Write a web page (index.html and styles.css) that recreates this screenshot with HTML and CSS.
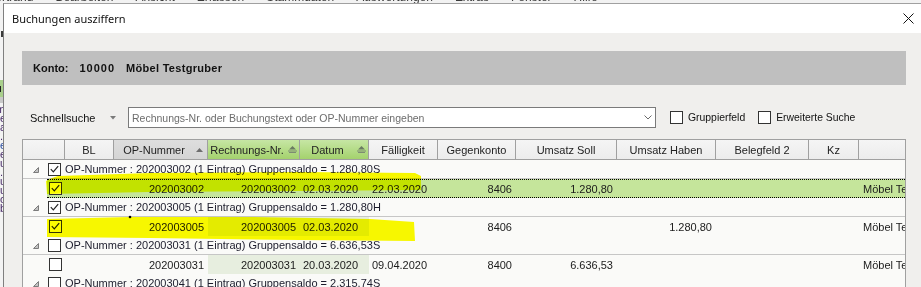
FILE: index.html
```html
<!DOCTYPE html>
<html lang="de">
<head>
  <meta charset="UTF-8">
  <title>Buchungen ausziffern</title>
  <link rel="stylesheet" href="styles.css">
</head>
<body>
  <div class="menubar">
    <span class="first">Vertrand</span><span>Bearbeiten</span><span>Ansicht</span><span>Erfassen</span><span>Stammdaten</span><span>Auswertungen</span><span>Extras</span><span>Fenster</span><span>Hilfe</span>
  </div>

  <div class="desk">
    <div class="app-edge">
      <div class="edge-gap"></div>
      <div class="edge-mark"></div>
      <div class="edge-green">u</div>
      <div class="edge-gray"></div>
      <div class="edge-text">m<br>e<br>a<br>.<br><span class="blue">el</span><br>e<br>u<br>.<br>u<br>u<br>c<br>b</div>
    </div>

    <div class="dialog">
      <div class="titlebar">
        <span class="title">Buchungen ausziffern</span>
        <svg class="close" width="11" height="11" viewBox="0 0 11 11"><path d="M0.5 0.5L10.5 10.5M10.5 0.5L0.5 10.5" stroke="#111" stroke-width="1"/></svg>
      </div>

      <div class="dialog-body">
        <div class="banner">
          <span>Konto:</span>
          <span class="acc-no">10000</span>
          <span class="acc-name">Möbel Testgruber</span>
        </div>

        <div class="search">
          <span class="search-label">Schnellsuche</span>
          <span class="search-mode"><svg width="6" height="4" viewBox="0 0 6 4"><path d="M0 0h6L3 3.5z" fill="#7a7a7a"/></svg></span>
          <div class="search-box">
            <span class="placeholder">Rechnungs-Nr. oder Buchungstext oder OP-Nummer eingeben</span>
            <svg class="chevron" width="8" height="5" viewBox="0 0 8 5"><path d="M0.5 0.5L4 4L7.5 0.5" fill="none" stroke="#6b6b6b" stroke-width="1"/></svg>
          </div>
          <label class="opt"><span class="cb"></span>Gruppierfeld</label>
          <label class="opt"><span class="cb"></span>Erweiterte Suche</label>
        </div>

        <div class="grid">
          <div class="grid-head">
            <div class="hc c-sel"></div>
            <div class="hc c-bl"><span class="hl">BL</span></div>
            <div class="hc c-op sorted"><span class="hl">OP-Nummer</span><span class="glyph"><svg width="7" height="4" viewBox="0 0 7 4"><path d="M3.5 0L7 4H0z" fill="#6e6e6e"/></svg></span></div>
            <div class="hc c-rech grouped"><span class="hl">Rechnungs-Nr.</span><span class="glyph"><svg width="9" height="7" viewBox="0 0 9 7"><path d="M4.5 0L8 3.5H1z" fill="#6a7a62"/><path d="M0 4.5h9v1H0zM1 6h7v1H1z" fill="#7d8c72"/></svg></span></div>
            <div class="hc c-dat grouped"><span class="hl">Datum</span><span class="glyph"><svg width="9" height="7" viewBox="0 0 9 7"><path d="M4.5 0L8 3.5H1z" fill="#6a7a62"/><path d="M0 4.5h9v1H0zM1 6h7v1H1z" fill="#7d8c72"/></svg></span></div>
            <div class="hc c-fael"><span class="hl">Fälligkeit</span></div>
            <div class="hc c-gegen"><span class="hl">Gegenkonto</span></div>
            <div class="hc c-soll"><span class="hl">Umsatz Soll</span></div>
            <div class="hc c-haben"><span class="hl">Umsatz Haben</span></div>
            <div class="hc c-beleg"><span class="hl">Belegfeld 2</span></div>
            <div class="hc c-kz"><span class="hl">Kz</span></div>
            <div class="hc c-text"></div>
          </div>

          <div class="group-row">
            <span class="expander"><svg width="6" height="6" viewBox="0 0 6 6"><path d="M5.5 0.5V5.5H0.5z" fill="#c4c4c4" stroke="#7c7c7c" stroke-width="1"/></svg></span>
            <span class="cb checked"><svg width="11" height="11" viewBox="0 0 11 11"><path d="M1.8 5.2L4.3 7.8L9.2 2.2" fill="none" stroke="#222" stroke-width="1.2"/></svg></span>
            <span class="group-text">OP-Nummer : 202003002 (1 Eintrag) Gruppensaldo = 1.280,80S</span>
          </div>
          <div class="data-row">
            <div class="cells focused">
              <div class="cell c-sel"><span class="cb checked"><svg width="11" height="11" viewBox="0 0 11 11"><path d="M1.8 5.2L4.3 7.8L9.2 2.2" fill="none" stroke="#222" stroke-width="1.2"/></svg></span></div>
              <div class="cell c-bl"></div>
              <div class="cell c-op num">202003002</div>
              <div class="cell c-rech num">202003002</div>
              <div class="cell c-dat">02.03.2020</div>
              <div class="cell c-fael">22.03.2020</div>
              <div class="cell c-gegen num">8406</div>
              <div class="cell c-soll num">1.280,80</div>
              <div class="cell c-haben num"></div>
              <div class="cell c-beleg"></div>
              <div class="cell c-kz"></div>
              <div class="cell c-text">Möbel Testgruber</div>
            </div>
          </div>

          <div class="group-row">
            <span class="expander"><svg width="6" height="6" viewBox="0 0 6 6"><path d="M5.5 0.5V5.5H0.5z" fill="#c4c4c4" stroke="#7c7c7c" stroke-width="1"/></svg></span>
            <span class="cb checked"><svg width="11" height="11" viewBox="0 0 11 11"><path d="M1.8 5.2L4.3 7.8L9.2 2.2" fill="none" stroke="#222" stroke-width="1.2"/></svg></span>
            <span class="group-text">OP-Nummer : 202003005 (1 Eintrag) Gruppensaldo = 1.280,80H</span>
          </div>
          <div class="data-row">
            <div class="cells">
              <div class="cell c-sel"><span class="cb checked"><svg width="11" height="11" viewBox="0 0 11 11"><path d="M1.8 5.2L4.3 7.8L9.2 2.2" fill="none" stroke="#222" stroke-width="1.2"/></svg></span></div>
              <div class="cell c-bl"></div>
              <div class="cell c-op num">202003005</div>
              <div class="cell c-rech num tint">202003005</div>
              <div class="cell c-dat tint">02.03.2020</div>
              <div class="cell c-fael"></div>
              <div class="cell c-gegen num">8406</div>
              <div class="cell c-soll num"></div>
              <div class="cell c-haben num">1.280,80</div>
              <div class="cell c-beleg"></div>
              <div class="cell c-kz"></div>
              <div class="cell c-text">Möbel Testgruber</div>
            </div>
          </div>

          <div class="group-row">
            <span class="expander"><svg width="6" height="6" viewBox="0 0 6 6"><path d="M5.5 0.5V5.5H0.5z" fill="#c4c4c4" stroke="#7c7c7c" stroke-width="1"/></svg></span>
            <span class="cb"></span>
            <span class="group-text">OP-Nummer : 202003031 (1 Eintrag) Gruppensaldo = 6.636,53S</span>
          </div>
          <div class="data-row">
            <div class="cells">
              <div class="cell c-sel"><span class="cb"></span></div>
              <div class="cell c-bl"></div>
              <div class="cell c-op num">202003031</div>
              <div class="cell c-rech num tint">202003031</div>
              <div class="cell c-dat tint">20.03.2020</div>
              <div class="cell c-fael">09.04.2020</div>
              <div class="cell c-gegen num">8400</div>
              <div class="cell c-soll num">6.636,53</div>
              <div class="cell c-haben num"></div>
              <div class="cell c-beleg"></div>
              <div class="cell c-kz"></div>
              <div class="cell c-text">Möbel Testgruber</div>
            </div>
          </div>

          <div class="group-row">
            <span class="expander"><svg width="6" height="6" viewBox="0 0 6 6"><path d="M5.5 0.5V5.5H0.5z" fill="#c4c4c4" stroke="#7c7c7c" stroke-width="1"/></svg></span>
            <span class="cb"></span>
            <span class="group-text">OP-Nummer : 202003041 (1 Eintrag) Gruppensaldo = 2.315,74S</span>
          </div>

          <!-- highlighter strokes drawn over the screenshot -->
          <svg class="marker" width="400" height="110" viewBox="0 0 400 110">
            <path d="M35 36L127 33L277 32L392 33L398 36L398 50L277 51L127 52L24 54L23 41L29 38Z" fill="#fcfc00"/>
            <path d="M24 79L107 77L227 77L347 79L391 82L392 101L277 100L127 98L24 97Z" fill="#fcfc00"/>
            <circle cx="107" cy="77" r="1.3" fill="#000"/>
          </svg>
        </div>
      </div>
    </div>
  </div>
</body>
</html>
```

FILE: styles.css
```css
* { box-sizing: border-box; }
body { margin: 0; width: 921px; height: 287px; overflow: hidden; background: #f0f0f0; font-family: "Liberation Sans", Arial, sans-serif; font-size: 11px; color: #1b1b1b; }

/* background application */
.menubar { height: 3px; overflow: hidden; display: flex; gap: 22px; background: #f2f2f2; }
.menubar span { font: 12px/12px "Liberation Sans", sans-serif; margin-top: -9px; color: #3a3a3a; white-space: nowrap; flex: none; }
.menubar .first { margin-left: -12px; }
.desk { display: flex; height: 284px; width: 921px; }
.app-edge { width: 3px; flex: none; overflow: hidden; background: #f3f3f3; }
.edge-gap { height: 28px; }
.edge-mark { width: 2px; height: 6px; margin-left: 1px; background: #3b3b3b; margin-bottom: 43px; }
.edge-green { height: 17px; background: #a9cf8c; font-weight: bold; text-indent: -5px; line-height: 17px; }
.edge-gray { height: 6px; background: #c9c9c9; }
.edge-text { text-indent: -4px; line-height: 9px; color: #4a2d6a; white-space: nowrap; padding-top: 2px; }
.edge-text .blue { color: #2a4da0; }

/* dialog */
.dialog { flex: 1; min-width: 0; display: flex; flex-direction: column; border-left: 1px solid #7f7f7f; border-top: 1px solid #a0a0a0; background: #f0efed; }
.titlebar { height: 29px; flex: none; display: flex; align-items: center; background: #fff; padding-left: 8px; }
.title { font-family: "Noto Sans", sans-serif; font-size: 11px; color: #111; }
.close { margin-left: auto; margin-right: 7px; }
.dialog-body { flex: 1; min-height: 0; display: flex; flex-direction: column; padding: 18px 15px 0 18px; }

.banner { height: 34px; flex: none; display: flex; align-items: center; padding-left: 11px; background: #bfbfbf; font-weight: bold; color: #111; white-space: nowrap; }
.acc-no { margin-left: 11px; letter-spacing: 1px; }
.acc-name { margin-left: 11px; letter-spacing: 0.3px; }

.search { height: 21px; flex: none; margin-top: 22px; display: flex; align-items: center; white-space: nowrap; }
.search-label { width: 86px; flex: none; padding-left: 8px; color: #111; }
.search-mode { width: 20px; flex: none; display: flex; padding-left: 2px; }
.search-box { width: 528px; height: 21px; flex: none; display: flex; align-items: center; border: 1px solid #7a7a7a; background: #fff; padding: 0 3px; }
.placeholder { flex: 1; color: #6d6d6d; font-size: 10.5px; }
.opt { display: flex; align-items: center; margin-left: 14px; color: #111; font-size: 10.4px; }
.opt + .opt { margin-left: 13px; }
.opt .cb { margin-right: 5px; }

.cb { width: 13px; height: 13px; flex: none; border: 1px solid #333; background: #fff; display: inline-flex; }

/* grid */
.grid { flex: 1; min-height: 0; margin-top: 11px; position: relative; display: flex; flex-direction: column; overflow: hidden; border: 1px solid #a0a0a0; border-bottom: none; background: #fafaf8; }
.grid-head { height: 20px; flex: none; display: flex; border-bottom: 1px solid #a0a0a0; background: linear-gradient(#f5f5f5, #ececec); }
.hc { flex: none; display: flex; align-items: center; border-right: 1px solid #a0a0a0; color: #222; white-space: nowrap; }
.hc .hl { flex: 1; text-align: center; }
.hc .glyph { width: 13px; padding-left: 2px; display: flex; }
.hc.sorted { background: linear-gradient(#dedede, #d4d4d4); }
.hc.grouped { background: linear-gradient(#c6e6a4, #a4d26d); }
.hc.c-text { border-right: none; }

.c-sel { width: 42px; }
.c-bl { width: 49px; }
.c-op { width: 94px; }
.c-rech { width: 92px; }
.c-dat { width: 69px; }
.c-fael { width: 69px; }
.c-gegen { width: 78px; }
.c-soll { width: 101px; }
.c-haben { width: 99px; }
.c-beleg { width: 93px; }
.c-kz { width: 50px; }
.hc.c-text, .cell.c-text { flex: 1; min-width: 0; }

.group-row { height: 19px; flex: none; display: flex; align-items: center; border-bottom: 1px solid #c6c6c6; white-space: nowrap; }
.expander { display: flex; margin-left: 10px; margin-top: 2px; }
.group-row .cb { margin-left: 9px; }
.group-text { margin-left: 4px; color: #1c1c2c; }

.data-row { height: 19px; flex: none; display: flex; padding-left: 24px; }
.cells { flex: 1; min-width: 0; display: flex; }
.cells.focused { background: #c5e59b; border-top: 1px dotted #000; border-bottom: 1px dotted #000; }
.cell { flex: none; display: flex; align-items: center; padding: 0 3px; white-space: nowrap; overflow: hidden; }
.cell.num { justify-content: flex-end; padding-right: 4px; }
.cell.tint { background: #e7eedf; }
.data-row .c-sel { width: 18px; padding: 0 0 0 2px; }
.data-row .c-text { padding-left: 4px; }

.marker { position: absolute; left: 0; top: 0; mix-blend-mode: multiply; pointer-events: none; }
```
